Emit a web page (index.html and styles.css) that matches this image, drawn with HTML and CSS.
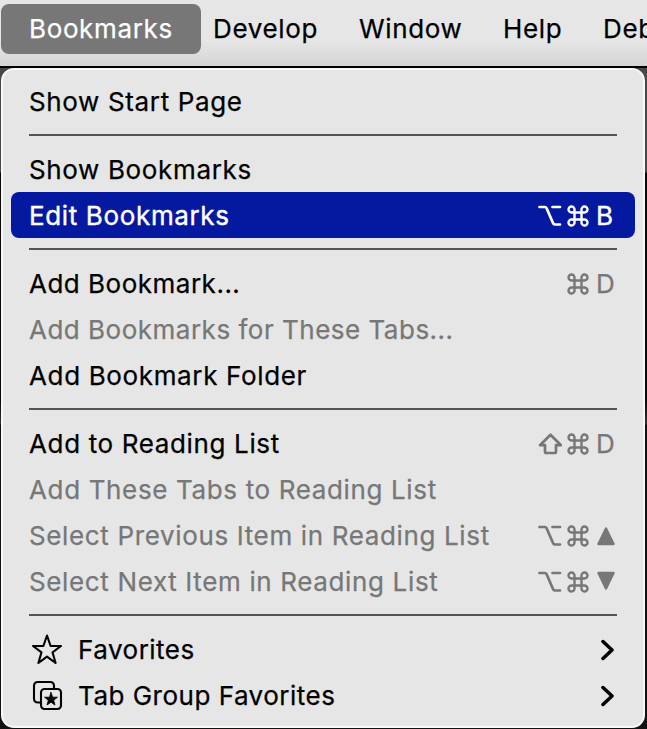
FILE: index.html
```
<!DOCTYPE html>
<html lang="en">
<head>
<meta charset="utf-8">
<title>Bookmarks menu</title>
<link rel="stylesheet" href="styles.css">
</head>
<body>
<svg class="symbols" aria-hidden="true">
  <symbol id="command" viewBox="0 0 22 22"><path d="M7.500 7.500H14.500V14.500H7.500ZM7.500 7.500V4.700A3 3 0 1 0 4.700 7.500ZM14.500 7.500V4.700A3 3 0 1 1 17.300 7.500ZM14.500 14.500V17.300A3 3 0 1 0 17.300 14.500ZM7.500 14.500V17.300A3 3 0 1 1 4.700 14.500Z"/></symbol>
  <symbol id="option" viewBox="0 0 24 22"><path d="M1.500 2H7Q8 2 8.500 3L15 18Q15.500 19.500 17 19.500H22M14.500 2H22"/></symbol>
  <symbol id="shift" viewBox="0 0 24 22"><path d="M12.500 1.700L23 12.200H18V18.500Q18 20 16.500 20H8.500Q7 20 7 18.500V12.200H2Z"/></symbol>
  <symbol id="triangle" viewBox="0 0 18 20"><path d="M9 2.500L16.500 18H1.500Z" fill="currentColor"/></symbol>
  <symbol id="chevron" viewBox="0 0 14 22"><path d="M3 2.500L12 11L3 19.500"/></symbol>
</svg>
<nav class="menubar">
  <span class="title active">Bookmarks</span>
  <span class="title develop">Develop</span>
  <span class="title window">Window</span>
  <span class="title help">Help</span>
  <span class="title debug">Debug</span>
</nav>
<main class="menu">
  <div class="item"><span class="label">Show Start Page</span></div>
  <hr>
  <div class="item"><span class="label">Show Bookmarks</span></div>
  <div class="item selected"><span class="label">Edit Bookmarks</span><span class="keys"><svg class="opt"><use href="#option"/></svg><svg class="cmd"><use href="#command"/></svg><b>B</b></span></div>
  <hr>
  <div class="item tight"><span class="label">Add Bookmark...</span><span class="keys"><svg class="cmd"><use href="#command"/></svg><b>D</b></span></div>
  <div class="item disabled tight"><span class="label">Add Bookmarks for These Tabs...</span></div>
  <div class="item"><span class="label">Add Bookmark Folder</span></div>
  <hr>
  <div class="item"><span class="label">Add to Reading List</span><span class="keys"><svg class="opt"><use href="#shift"/></svg><svg class="cmd"><use href="#command"/></svg><b>D</b></span></div>
  <div class="item disabled"><span class="label">Add These Tabs to Reading List</span></div>
  <div class="item disabled"><span class="label">Select Previous Item in Reading List</span><span class="keys"><svg class="opt"><use href="#option"/></svg><svg class="cmd"><use href="#command"/></svg><svg class="tri"><use href="#triangle"/></svg></span></div>
  <div class="item disabled"><span class="label">Select Next Item in Reading List</span><span class="keys"><svg class="opt"><use href="#option"/></svg><svg class="cmd"><use href="#command"/></svg><svg class="tri down"><use href="#triangle"/></svg></span></div>
  <hr>
  <div class="item tight"><svg class="icon" viewBox="0 0 34 34"><path d="M18 3.500L21.600 14H32L23.500 20.300L26.600 31L18 24.600L9.400 31L12.500 20.300L4 14H14.400Z"/></svg><span class="label">Favorites</span><svg class="chevron"><use href="#chevron"/></svg></div>
  <div class="item tight"><svg class="icon" viewBox="0 0 34 34"><path d="M11 24.500H9Q5 24.500 5 20.500V8Q5 4 9 4H21Q25 4 25 8V10"/><rect x="12" y="11" width="20" height="20" rx="3.500"/><path class="solid" d="M22 14.500L23.700 19.200H28.500L24.700 22.200L26 27L22 24.200L18 27L19.300 22.200L15.500 19.200H20.300Z"/></svg><span class="label">Tab Group Favorites</span><svg class="chevron"><use href="#chevron"/></svg></div>
</main>
</body>
</html>
```
FILE: styles.css
```
* { box-sizing: border-box; }
body { margin: 0; width: 647px; height: 729px; overflow: hidden; background: linear-gradient(#484848 172px, #080808 173px, #080808 400px, #333 424px, #111 425px); font: 400 26px/46px Inter, "Liberation Sans", sans-serif; letter-spacing: .64px; -webkit-text-stroke: .25px currentColor; color: #000; }
.symbols { position: absolute; width: 0; height: 0; }
svg { fill: none; stroke: currentColor; stroke-width: 2.1; stroke-linecap: round; stroke-linejoin: round; }
.menubar { display: flex; height: 68px; padding-top: 4px; border-bottom: 2px solid #000; background: linear-gradient(#e6e6e6 40px, #d5d5d5 66px); white-space: nowrap; overflow: hidden; }
.title { height: 50px; line-height: 50px; flex: none; }
.active { width: 200px; margin-left: 1px; padding-left: 28px; border-radius: 8px; background: #777; color: #fff; }
.develop { margin-left: 12px; width: 146px; }
.window { width: 144px; }
.help { width: 100px; }
.menu { width: 644px; height: 660px; margin-left: 1px; padding: 8px; border: 2px solid #f8f8f8; border-radius: 13px; background: #e6e6e6; }
.item { display: flex; align-items: center; height: 46px; padding: 0 18px; border-radius: 8px; white-space: nowrap; }
.label, .keys b { padding-top: 2px; }
.tight { letter-spacing: .5px; }
hr { height: 2px; margin: 10px 18px; border: 0; background: #545454; }
.selected { background: #0518a0; color: #fff; -webkit-text-stroke-width: .4px; }
.disabled { color: #777; }
.keys { display: flex; align-items: center; margin-left: auto; color: #777; }
.selected .keys { color: #fff; }
.keys svg { margin-top: 2px; stroke-width: 2.4; }
.keys b { width: 19px; margin-left: 7px; margin-right: 2px; font-weight: 400; }
.keys .opt { width: 24px; height: 22px; margin-right: 5px; stroke-width: 2.7; }
.cmd { width: 22px; height: 22px; }
.keys .tri { width: 18px; height: 20px; margin-left: 8px; margin-right: 2px; }
.keys .down { margin-top: 0; transform: rotate(180deg); }
.icon { width: 34px; height: 34px; margin: 0 15px 0 0; }
.icon .solid { fill: currentColor; stroke-width: 0.8; }
.chevron { width: 14px; height: 22px; margin-top: 2px; margin-left: auto; margin-right: 3px; stroke-width: 3.5; }
```
